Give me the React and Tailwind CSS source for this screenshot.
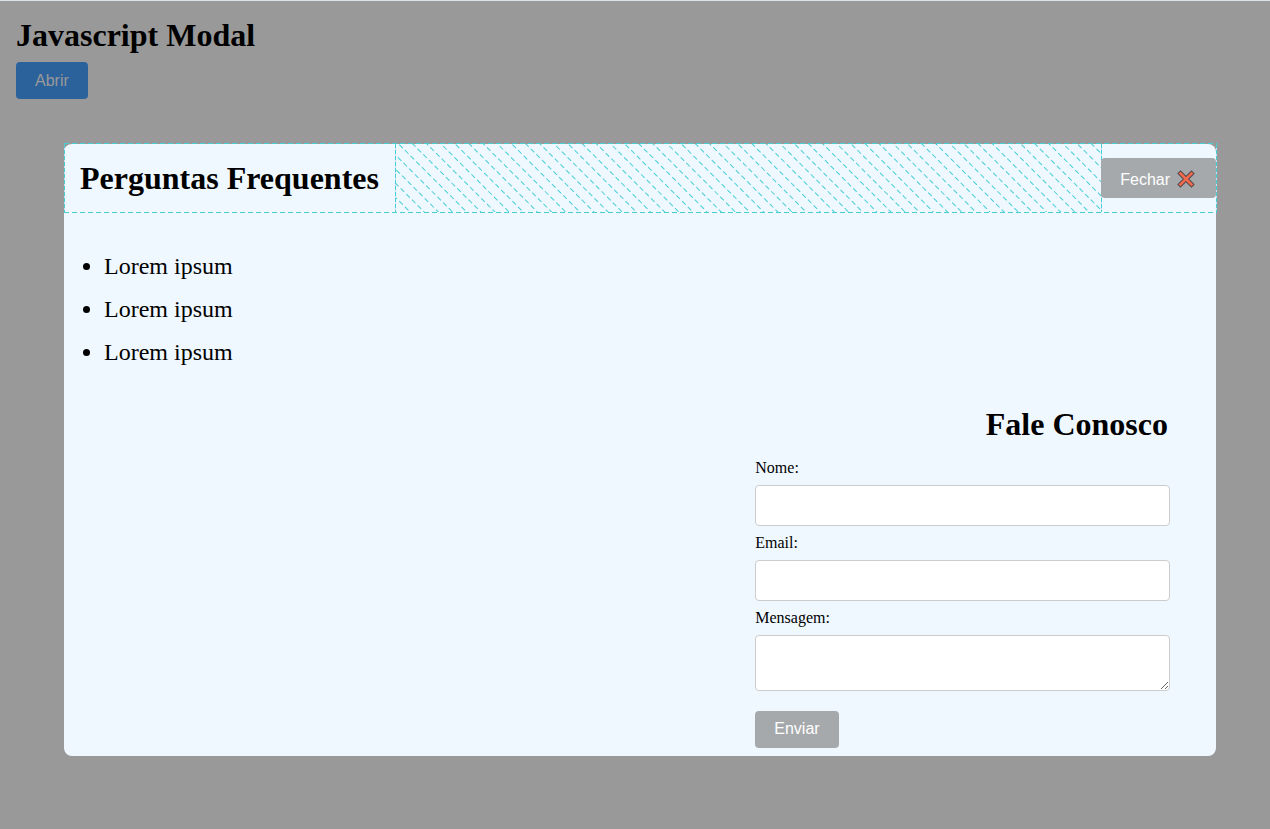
import React from "react";

const button =
  "rounded-sm border border-transparent px-[18px] text-base leading-[19px] text-white";
const field =
  "block w-full rounded-sm border border-[#cccccc] bg-white px-2 text-base text-black outline-none";

function CloseMark() {
  return (
    <svg width="22" height="18" viewBox="0 0 22 18" aria-hidden="true">
      <path
        d="M5.5 3.5 16.5 14.5M16.5 3.5 5.5 14.5"
        fill="none"
        stroke="#55494b"
        strokeWidth="4.6"
        strokeLinecap="square"
      />
      <path
        d="M5.5 3.5 16.5 14.5M16.5 3.5 5.5 14.5"
        fill="none"
        stroke="#f4694e"
        strokeWidth="2.6"
        strokeLinecap="square"
      />
    </svg>
  );
}

const hatchLines = Array.from({ length: 150 }, (_, i) => {
  const k = i - 140;
  return `M-5.3 ${(-1.9 + k * 10).toFixed(1)}H1800`;
}).join("");

function Hatching() {
  return (
    <svg className="h-[68px] w-full" aria-hidden="true">
      <path
        d={hatchLines}
        transform="rotate(45)"
        fill="none"
        stroke="#45ced3"
        strokeWidth="1"
        strokeDasharray="5 3"
      />
    </svg>
  );
}

function Rule({ vertical = false }) {
  return vertical ? (
    <div className="w-px shrink-0 bg-[repeating-linear-gradient(180deg,#45ced3_0_4px,#c9dff0_4px_6px)]" />
  ) : (
    <div className="h-px shrink-0 bg-[repeating-linear-gradient(90deg,#45ced3_0_5px,transparent_5px_8px)]" />
  );
}

function Modal() {
  return (
    <section
      role="dialog"
      aria-labelledby="faq-title"
      className="flow-root rounded-lg bg-[#f0f8ff] pb-2"
    >
      <header className="-mt-px -mr-px flex h-[70px] flex-col">
        <Rule />
        <div className="flex flex-1 items-stretch">
          <Rule vertical />
          <h2
            id="faq-title"
            className="flex items-center pr-4 pl-[15px] text-[32px] leading-9 font-bold"
          >
            Perguntas Frequentes
          </h2>
          <Rule vertical />
          <div className="min-w-0 flex-1">
            <Hatching />
          </div>
          <Rule vertical />
          <div className="-ml-px flex items-center">
            <button
              type="button"
              className={`${button} flex h-10 items-center gap-[5px] bg-[#a5a9ac] pt-0.5 font-['Liberation_Sans',sans-serif]`}
            >
              Fechar
              <CloseMark />
            </button>
          </div>
          <Rule vertical />
        </div>
        <Rule />
      </header>

      <ul className="mt-8 list-disc pl-10 text-2xl leading-[27px]">
        <li className="pb-4 pt-2">Lorem ipsum</li>
        <li className="pb-4">Lorem ipsum</li>
        <li className="pb-4">Lorem ipsum</li>
      </ul>

      <form
        className="mt-6 mr-[46px] ml-auto w-[36%]"
        onSubmit={(event) => event.preventDefault()}
      >
        <h2 className="pr-0.5 text-right text-[32px] leading-9 font-bold">
          Fale Conosco
        </h2>
        <label htmlFor="nome" className="mt-[17px] mb-2 block text-base leading-[18px]">
          Nome:
        </label>
        <input id="nome" type="text" className={`${field} h-[41px]`} />
        <label htmlFor="email" className="my-2 block text-base leading-[18px]">
          Email:
        </label>
        <input id="email" type="email" className={`${field} h-[41px]`} />
        <label htmlFor="mensagem" className="my-2 block text-base leading-[18px]">
          Mensagem:
        </label>
        <textarea id="mensagem" className={`${field} h-14 resize`} />
        <button
          type="submit"
          className={`${button} mt-5 block h-[37px] bg-[#a5a9ac] pb-0.5 font-['Liberation_Sans',sans-serif]`}
        >
          Enviar
        </button>
      </form>
    </section>
  );
}

export default function App() {
  return (
    <main className="min-h-screen border-t border-[#dce3ee] bg-[#999999] font-['Liberation_Serif',serif] text-black">
      <div className="px-4 pt-4">
        <h1 className="text-[32px] leading-9 font-bold">Javascript Modal</h1>
        <button
          type="button"
          className="mt-[9px] block h-[37px] rounded-sm border border-transparent bg-[#2c629c] px-[18px] font-['Liberation_Sans',sans-serif] text-base leading-[19px] text-[#999999]"
        >
          Abrir
        </button>
      </div>
      <div className="pt-[45px] pr-[54px] pb-16 pl-16">
        <Modal />
      </div>
    </main>
  );
}
